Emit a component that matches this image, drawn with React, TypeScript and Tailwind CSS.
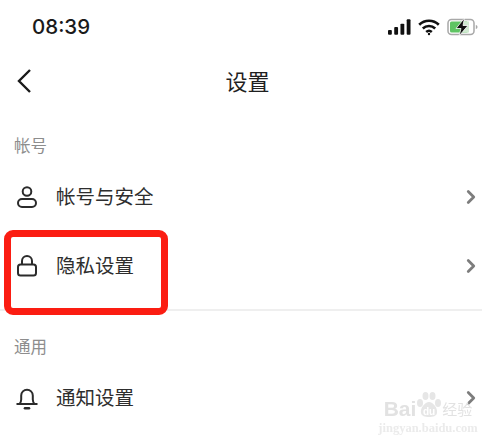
import { ChevronRight } from 'lucide-react';

const cjk = 'font-["Noto_Sans_CJK_SC","Noto_Sans_CJK_JP",sans-serif]';

const UserIcon = () => (
  <svg width="24" height="24" viewBox="0 0 24 24" fill="none" stroke="#2b2b2b" strokeWidth="2">
    <circle cx="12" cy="6.500" r="4.300" />
    <rect x="3" y="14" width="18" height="8" rx="4" />
  </svg>
);

const LockIcon = () => (
  <svg width="24" height="24" viewBox="0 0 24 24" fill="none" stroke="#2b2b2b" strokeWidth="2">
    <rect x="3" y="10.500" width="18" height="11" rx="2.500" />
    <path d="M7 10.500V7a5 5 0 0 1 10 0v3.500" />
  </svg>
);

const BellIcon = () => (
  <svg width="24" height="24" viewBox="0 0 24 24" fill="none" stroke="#2b2b2b" strokeWidth="2">
    <path d="M1.500 18h21M4.500 18c1.200-1.400 1.700-2.600 1.700-4.500V9.500a5.800 5.800 0 0 1 11.600 0v4c0 1.900.5 3.100 1.700 4.500" />
    <path d="M10 22.300h4" strokeWidth="2.600" strokeLinecap="round" />
  </svg>
);

const StatusIcons = () => (
  <div className="flex items-center gap-[7px]">
    <svg width="23" height="16" viewBox="0 0 24 16" fill="#111">
      <rect x="0" y="11" width="4" height="5" rx="1" />
      <rect x="6.500" y="8" width="4" height="8" rx="1" />
      <rect x="13" y="4.500" width="4" height="11.500" rx="1" />
      <rect x="19.500" y="0" width="4" height="16" rx="1" />
    </svg>
    <svg width="22" height="17" viewBox="0 0 22 17" fill="none" stroke="#111" strokeWidth="2.600">
      <path d="M1.200 5.800a14 14 0 0 1 19.600 0" />
      <path d="M4.800 9.500a9 9 0 0 1 12.400 0" />
      <path d="M8.200 13a4.200 4.200 0 0 1 5.600 0" />
      <circle cx="11" cy="15" r="1.200" fill="#111" stroke="none" />
    </svg>
    <svg width="31" height="18" viewBox="0 0 31 18" fill="none">
      <rect x="1" y="1.500" width="26" height="15" rx="3.500" stroke="#a8a8a8" strokeWidth="1.500" />
      <rect x="3" y="3.500" width="18" height="11" rx="1.500" fill="#5fc463" />
      <rect x="16" y="3.500" width="6" height="11" fill="#cfe9d0" />
      <path d="M28.800 7v4c1.200-.3 1.700-1 1.700-2s-.5-1.700-1.700-2z" fill="#a8a8a8" />
      <path d="M17.500 0 9 10.500h5L12 18 21 7.500h-5z" fill="#111" stroke="#fff" strokeWidth="0.800" />
    </svg>
  </div>
);

const Row = ({ icon, label }: { icon: React.ReactNode; label: string }) => (
  <div className="flex h-[69px] items-center pl-[15px]">
    <div className="w-[41px] shrink-0">{icon}</div>
    <span className={`flex-1 pb-[2px] text-[19.500px] leading-none text-[#2e2e2e] ${cjk}`}>{label}</span>
    <ChevronRight size={22} strokeWidth={3} className="text-[#7d7d7d]" />
  </div>
);

const Watermark = () => (
  <div className="pointer-events-none absolute left-[383px] top-[391px] flex w-[90px] flex-col items-center blur-[0.4px]">
    <div className="flex h-[28px] items-end whitespace-nowrap text-[#e2e2e2]">
      <span className='font-["Liberation_Sans",sans-serif] text-[21px] leading-none font-bold'>Bai</span>
      <svg width="26" height="28" viewBox="0 0 26 28" className="shrink-0">
        <g fill="#e6e6e6">
          <ellipse cx="4" cy="12" rx="3" ry="4" />
          <ellipse cx="9.500" cy="5" rx="3" ry="4" />
          <ellipse cx="16.500" cy="5" rx="3" ry="4" />
          <ellipse cx="22" cy="12" rx="3" ry="4" />
          <path d="M13 11c-4 0-9 6-8 11 .6 3 4 4 8 4s7.500-1 8-4c1-5-4-11-8-11z" />
        </g>
        <text x="13" y="24" textAnchor="middle" fontSize="10" fontWeight="700" fill="#fff" fontFamily="Liberation Sans, sans-serif">du</text>
      </svg>
      <span className={`text-[15px] leading-[20px] ${cjk}`}>经验</span>
    </div>
    <span className='mt-[3px] whitespace-nowrap font-["Liberation_Serif",serif] text-[12.500px] leading-none font-bold text-[#ebebeb]'>
      jingyan.baidu.com
    </span>
  </div>
);

export default function App() {
  return (
    <div className="relative h-[445px] w-[500px] overflow-hidden bg-white">
      <div className="w-[482px]">
        <div className="flex h-[54px] items-center justify-between pl-[32px] pr-[4px]">
          <span className='font-["Inter",sans-serif] text-[20.500px] leading-none font-medium text-[#1a1a1a]'>08:39</span>
          <StatusIcons />
        </div>

        <div className="relative flex h-[56px] items-center justify-center pb-[4px] pl-[13px]">
          <svg width="16" height="26" viewBox="0 0 16 26" fill="none" stroke="#1a1a1a" strokeWidth="2.400" className="absolute left-[16px] top-[14px]">
            <path d="M14 2 3 13l11 11" />
          </svg>
          <span className={`text-[22px] leading-none text-[#1f1f1f] ${cjk}`}>设置</span>
        </div>

        <div className={`pl-[14px] pt-[25px] text-[16.500px] leading-[20px] text-[#8d8d8d] ${cjk}`}>帐号</div>
        <div className="mt-[7px]">
          <Row icon={<UserIcon />} label="帐号与安全" />
          <Row icon={<LockIcon />} label="隐私设置" />
        </div>

        <div className="mt-[9px] h-[2px] bg-[#efefef]" />

        <div className={`pl-[14px] pt-[25px] text-[16.500px] leading-[20px] text-[#8d8d8d] ${cjk}`}>通用</div>
        <div className="mt-[7px]">
          <Row icon={<BellIcon />} label="通知设置" />
        </div>
      </div>

      <div className="absolute left-[4px] top-[230px] h-[85px] w-[164px] rounded-[9px] border-[7px] border-[#fb1d12]" />
      <Watermark />
    </div>
  );
}
